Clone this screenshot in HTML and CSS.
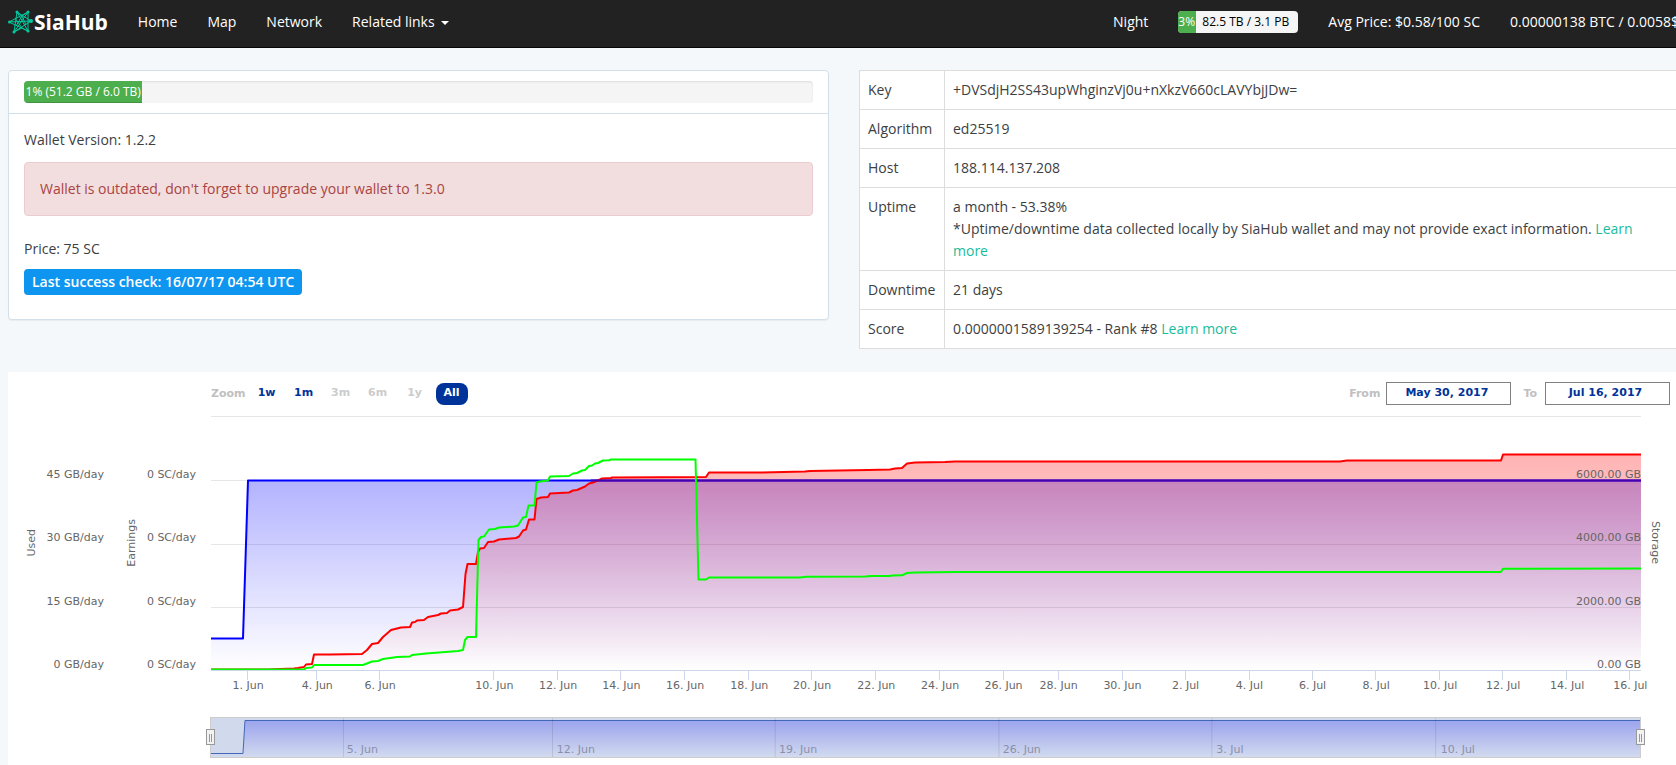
FILE: index.html
```html
<!DOCTYPE html>
<html lang="en">
<head>
<meta charset="utf-8">
<title>SiaHub</title>
<link rel="stylesheet" href="styles.css">
</head>
<body>
<header class="navbar">
  <a class="brand" href="#">
    <svg class="brand-icon" viewBox="0 0 26 24" aria-hidden="true">
      <path d="M9 2 L20 21 M9 2 L6 22 M20 2 L6 22 M20 2 L20 21 M1 12 L20 2 M1 12 L20 21 M1 12 L23 11 M9 2 L23 11 M6 22 L23 11 M6 22 L14 18 L20 21 M9 2 L14 6 L20 2 M7 8 L14 18 M14 6 L8 16 M14 6 L18 15"/>
      <circle cx="9" cy="2" r="1.500"/><circle cx="20" cy="2" r="1.500"/><circle cx="1.500" cy="12" r="1.500"/><circle cx="6" cy="22" r="1.500"/><circle cx="20" cy="21" r="1.500"/>
      <circle cx="23" cy="11" r="2"/>
    </svg>
    <span>SiaHub</span>
  </a>
  <nav class="menu">
    <a href="#">Home</a>
    <a href="#">Map</a>
    <a href="#">Network</a>
    <a href="#">Related links<span class="caret"></span></a>
  </nav>
  <div class="menu menu-right">
    <a href="#">Night</a>
    <div class="usage"><span class="usage-bar">3%</span><span class="usage-text">82.5 TB / 3.1 PB</span></div>
    <span class="stat">Avg Price: $0.58/100 SC</span>
    <span class="stat">0.00000138 BTC / 0.0058$</span>
  </div>
</header>

<main class="page">
  <div class="columns">
    <section class="card">
      <div class="card-head">
        <div class="progress"><div class="progress-bar">1% (51.2 GB / 6.0 TB)</div></div>
      </div>
      <div class="card-body">
        <p>Wallet Version: 1.2.2</p>
        <div class="alert">Wallet is outdated, don't forget to upgrade your wallet to 1.3.0</div>
        <p>Price: 75 SC</p>
        <span class="label">Last success check: 16/07/17 04:54 UTC</span>
      </div>
    </section>
    <table class="info">
      <tr><th scope="row">Key</th><td>+DVSdjH2SS43upWhginzVj0u+nXkzV660cLAVYbjJDw=</td></tr>
      <tr><th scope="row">Algorithm</th><td>ed25519</td></tr>
      <tr><th scope="row">Host</th><td>188.114.137.208</td></tr>
      <tr><th scope="row">Uptime</th><td>a month - 53.38%<br>*Uptime/downtime data collected locally by SiaHub wallet and may not provide exact information. <a href="#">Learn more</a></td></tr>
      <tr><th scope="row">Downtime</th><td>21 days</td></tr>
      <tr><th scope="row">Score</th><td>0.0000001589139254 - Rank #8 <a href="#">Learn more</a></td></tr>
    </table>
  </div>

  <section class="chart">
    <div class="toolbar">
      <div class="ranges">
        <span class="tool-label">Zoom</span>
        <button type="button">1w</button>
        <button type="button">1m</button>
        <button type="button" disabled>3m</button>
        <button type="button" disabled>6m</button>
        <button type="button" disabled>1y</button>
        <button type="button" class="active">All</button>
      </div>
      <div class="dates">
        <label class="tool-label" for="from">From</label>
        <input id="from" type="text" value="May 30, 2017">
        <label class="tool-label" for="to">To</label>
        <input id="to" type="text" value="Jul 16, 2017">
      </div>
    </div>
    <div class="stage">
      <div class="axis">
        <span class="axis-title">Used</span>
        <div class="axis-values"><span>45 GB/day</span><span>30 GB/day</span><span>15 GB/day</span><span>0 GB/day</span></div>
      </div>
      <div class="axis">
        <span class="axis-title">Earnings</span>
        <div class="axis-values"><span>0 SC/day</span><span>0 SC/day</span><span>0 SC/day</span><span>0 SC/day</span></div>
      </div>
      <div class="plot">
        <svg class="series" viewBox="0 0 1430 254" preserveAspectRatio="none" aria-hidden="true">
          <defs>
            <linearGradient id="blueFill" gradientUnits="userSpaceOnUse" x1="0" y1="64" x2="0" y2="254"><stop offset="0" stop-color="#00f" stop-opacity=".3"/><stop offset="1" stop-color="#00f" stop-opacity="0"/></linearGradient>
            <linearGradient id="redFill" gradientUnits="userSpaceOnUse" x1="0" y1="38" x2="0" y2="254"><stop offset="0" stop-color="#f00" stop-opacity=".3"/><stop offset="1" stop-color="#f00" stop-opacity="0"/></linearGradient>
          </defs>
          <path class="grid" d="M0 .5H1430M0 64.500H1430M0 128.500H1430M0 191.500H1430"/>
          <path fill="url(#blueFill)" d="M0 222H32L37 64H1430V254H0Z"/>
          <path class="line blue" d="M0 222.500H32L37 64.500H1430"/>
          <path fill="url(#redFill)" d="M0 253.500H57L83 252.500L87 252L93 251L95 248.500L101 248L103 238.500H119L151 238L156 234L161 228L167 227L172 221L180 214L190 211.500L199 211L201 206.500L204 206L206 204.500L213 204L217 201L227 199L230 197.500L236 197L239 194.500L247 193.500L252 191L254.500 158L256.500 148H265L267 136L269 132.500L273 132L277 126L283 125.500L288 123.500L305 122L308 120.500L312 114.500L315 113.500L318 103.500H323.500L325.500 83L330 81.500L337 81L339 77.500L358 76.500L362 74.500L366 74L374 70.500L378 67.500L382 66.500L389 63.500L391 62.500L400 62L401 61.500L495 61L498 56.500H549L594 55.500L599 55L657 54L679 53.500L684 52.500L691 52L696 47.500L704 46.500L734 46L744 45.500H1129L1136 44.500H1290L1292 38.500H1430V254H0Z"/>
          <path class="line red" d="M0 253.500H57L83 252.500L87 252L93 251L95 248.500L101 248L103 238.500H119L151 238L156 234L161 228L167 227L172 221L180 214L190 211.500L199 211L201 206.500L204 206L206 204.500L213 204L217 201L227 199L230 197.500L236 197L239 194.500L247 193.500L252 191L254.500 158L256.500 148H265L267 136L269 132.500L273 132L277 126L283 125.500L288 123.500L305 122L308 120.500L312 114.500L315 113.500L318 103.500H323.500L325.500 83L330 81.500L337 81L339 77.500L358 76.500L362 74.500L366 74L374 70.500L378 67.500L382 66.500L389 63.500L391 62.500L400 62L401 61.500L495 61L498 56.500H549L594 55.500L599 55L657 54L679 53.500L684 52.500L691 52L696 47.500L704 46.500L734 46L744 45.500H1129L1136 44.500H1290L1292 38.500H1430"/>
          <path class="line overlap" d="M380 64.500H1430"/>
          <path class="line green" d="M0 253.500H93L95 252L101 251.500L103 249H152L161 245.500L167 245L172 243L186 241L199 240.500L201 239L215 237.500L247 235L252 234L254 224L256.500 221H265L267.500 124L270 121L273 120.500L278 113.500L284 113L288 111.500L303 110.500L307 109.500L312 101.500L315 101L317.500 89.500H323.500L325.500 66.500L329 65.500L337 64.500L339 60.500L358 60L362 57.500L366 57L371 54.500L374 54L378 50L381 49.500L384 47.500L387 47L392 44.500L398 44.200L400 43.500H484.500L487.500 163.500H495L498 161.500H589L595 160.700L654 160.500L660 160H679L681 159.500L691 159.300L696 157L704 156.500L744 156H1290L1292 152.700L1430 152.500"/>
        </svg>
        <div class="storage-values"><span>6000.00 GB</span><span>4000.00 GB</span><span>2000.00 GB</span><span>0.00 GB</span></div>
      </div>
      <span class="storage-title">Storage</span>

      <svg class="dates-axis" role="img" aria-label="Dates">
        <g class="ticks">
          <line x2="100%" y1=".5" y2=".5"/>
          <line x1="2.55%" x2="2.55%" y2="10"/><line x1="7.38%" x2="7.38%" y2="10"/><line x1="11.78%" x2="11.78%" y2="10"/><line x1="19.76%" x2="19.76%" y2="10"/><line x1="24.23%" x2="24.23%" y2="10"/><line x1="28.64%" x2="28.64%" y2="10"/><line x1="33.11%" x2="33.11%" y2="10"/><line x1="37.59%" x2="37.59%" y2="10"/><line x1="41.99%" x2="41.99%" y2="10"/><line x1="46.47%" x2="46.47%" y2="10"/><line x1="50.94%" x2="50.94%" y2="10"/><line x1="55.42%" x2="55.42%" y2="10"/><line x1="59.27%" x2="59.27%" y2="10"/><line x1="63.74%" x2="63.74%" y2="10"/><line x1="68.15%" x2="68.15%" y2="10"/><line x1="72.62%" x2="72.62%" y2="10"/><line x1="77.03%" x2="77.03%" y2="10"/><line x1="81.43%" x2="81.43%" y2="10"/><line x1="85.91%" x2="85.91%" y2="10"/><line x1="90.31%" x2="90.31%" y2="10"/><line x1="94.79%" x2="94.79%" y2="10"/><line x1="99.2%" x2="99.2%" y2="10"/>
        </g>
        <g class="tick-text">
          <text x="2.6%" y="19">1. Jun</text><text x="7.43%" y="19">4. Jun</text><text x="11.83%" y="19">6. Jun</text><text x="19.81%" y="19">10. Jun</text><text x="24.28%" y="19">12. Jun</text><text x="28.69%" y="19">14. Jun</text><text x="33.16%" y="19">16. Jun</text><text x="37.64%" y="19">18. Jun</text><text x="42.04%" y="19">20. Jun</text><text x="46.52%" y="19">22. Jun</text><text x="50.99%" y="19">24. Jun</text><text x="55.42%" y="19">26. Jun</text><text x="59.27%" y="19">28. Jun</text><text x="63.74%" y="19">30. Jun</text><text x="68.15%" y="19">2. Jul</text><text x="72.62%" y="19">4. Jul</text><text x="77.03%" y="19">6. Jul</text><text x="81.48%" y="19">8. Jul</text><text x="85.96%" y="19">10. Jul</text><text x="90.36%" y="19">12. Jul</text><text x="94.84%" y="19">14. Jul</text><text x="99.25%" y="19">16. Jul</text>
        </g>
      </svg>

      <div class="navigator">
        <svg class="nav-plot" role="img" aria-label="Date range">
          <defs>
            <linearGradient id="navFill" x1="0" y1="0" x2="0" y2="1"><stop offset="0" stop-color="#9ca4ee"/><stop offset="1" stop-color="#d1daee"/></linearGradient>
          </defs>
          <svg width="100%" height="100%" viewBox="0 0 1430 39" preserveAspectRatio="none">
            <path fill="url(#navFill)" d="M0 35.500H32L34 2.500H1430V39H0Z"/>
            <path class="nav-line" d="M0 35.500H32L34 2.500H1430"/>
          </svg>
          <g class="nav-grid"><line x1="9.27%" x2="9.27%" y2="39"/><line x1="23.9%" x2="23.9%" y2="39"/><line x1="39.48%" x2="39.48%" y2="39"/><line x1="55.14%" x2="55.14%" y2="39"/><line x1="70.04%" x2="70.04%" y2="39"/><line x1="85.7%" x2="85.7%" y2="39"/></g>
          <g class="nav-text"><text x="9.5%" y="35">5. Jun</text><text x="24.2%" y="35">12. Jun</text><text x="39.75%" y="35">19. Jun</text><text x="55.4%" y="35">26. Jun</text><text x="70.35%" y="35">3. Jul</text><text x="86.05%" y="35">10. Jul</text></g>
        </svg>
        <span class="handle handle-left"></span>
        <span class="handle handle-right"></span>
      </div>
    </div>
  </section>
</main>
</body>
</html>
```

FILE: styles.css
```css
* { box-sizing: border-box; }

body {
  margin: 0;
  overflow: hidden;
  background: #f4f8fb;
  color: #3c4043;
  font: 14px/22px "Open Sans", "Noto Sans", sans-serif;
}

a { color: #18bc9c; text-decoration: none; }
p { margin: 0; }

/* Top bar */
.navbar {
  display: flex;
  align-items: center;
  height: 48px;
  padding: 0 0 4px 8px;
  overflow: hidden;
  background: #222;
  border-bottom: 1px solid #080808;
}
.brand {
  display: flex;
  align-items: center;
  color: #fff;
  font-size: 21px;
  font-weight: 700;
}
.brand-icon { width: 26px; height: 24px; fill: #00cba0; stroke: #00cba0; }
.brand-icon path { fill: none; stroke-width: 1; }
.brand-icon circle { stroke: none; }
.menu {
  display: flex;
  align-items: center;
  gap: 30px;
  margin-left: 30px;
  white-space: nowrap;
}
.menu a, .stat { color: #fff; }
.menu-right { flex: none; margin-left: auto; margin-right: -3px; }
.caret {
  display: inline-block;
  margin-left: 6px;
  vertical-align: middle;
  border: 4px solid transparent;
  border-top-color: #fff;
  border-bottom: 0;
}
.usage {
  display: flex;
  width: 120px;
  height: 22px;
  overflow: hidden;
  border-radius: 4px;
  background: #f5f5f5;
  color: #000;
  font-size: 12px;
}
.usage-bar { width: 18px; background: #4cae4c; color: #fff; }
.usage-text { padding-left: 6px; }

/* Page */
.page { margin: 22px -4px 0 8px; }
.columns {
  display: grid;
  grid-template-columns: 1fr 1fr;
  gap: 30px;
  align-items: start;
  margin-bottom: 23px;
}

.card {
  background: #fff;
  border: 1px solid #d3e0e9;
  border-radius: 4px;
  box-shadow: 0 1px 1px rgba(0, 0, 0, .05);
}
.card-head { padding: 10px 15px; border-bottom: 1px solid #d3e0e9; }
.card-body { padding: 15px 15px 24px; }
.progress {
  height: 22px;
  overflow: hidden;
  border-radius: 4px;
  background: #f5f5f5;
  box-shadow: inset 0 1px 2px rgba(0, 0, 0, .1);
}
.progress-bar {
  width: 15%;
  height: 100%;
  background: #4cae4c;
  box-shadow: inset 0 -1px 0 rgba(0, 0, 0, .15);
  color: #fff;
  font-size: 12px;
  text-align: center;
  white-space: nowrap;
}
.alert {
  margin: 11px 0 22px;
  padding: 15px;
  border: 1px solid #ebccd1;
  border-radius: 4px;
  background: #f2dede;
  color: #a94442;
}
.label {
  display: block;
  width: fit-content;
  margin-top: 9px;
  padding: 2px 8px;
  border-radius: 4px;
  background: #0d95ef;
  color: #fff;
  font-weight: 600;
}

.info { width: 100%; border-collapse: collapse; background: #fff; }
.info th, .info td {
  padding: 8px;
  border: 1px solid #ddd;
  font-weight: 400;
  text-align: left;
  vertical-align: top;
}
.info th { width: 85px; }

/* Chart */
.chart {
  padding-bottom: 30px;
  background: #fff;
  color: #666;
  font: 11px/12px "DejaVu Sans", sans-serif;
}
.toolbar {
  display: flex;
  justify-content: space-between;
  padding: 10px 10px 11px 203px;
}
.ranges, .dates { display: flex; align-items: center; gap: 5px; }
.dates { gap: 6px; }
.tool-label { color: #c0c0c0; font-weight: 700; }
.dates input + .tool-label { margin: 0 2px 0 6px; }
.ranges button {
  width: 32px;
  height: 22px;
  padding: 0 0 2px;
  border: 0;
  border-radius: 8px;
  background: none;
  color: #039;
  font: inherit;
  font-weight: 700;
}
.ranges button:disabled { color: #ccc; }
.ranges button.active { background: #039; color: #fff; }
.dates input {
  width: 125px;
  height: 23px;
  padding: 0 4px 2px 0;
  border: 1px solid #808080;
  background: #fff;
  color: #039;
  font: inherit;
  font-weight: 700;
  text-align: center;
}

.stage {
  display: grid;
  grid-template-columns: 96px 92px 1fr 39px;
  grid-template-rows: 254px 47px 41px;
}
.axis { display: flex; align-items: center; justify-content: space-between; }
.axis:first-child { padding-left: 18px; }
.axis:nth-child(2) { padding-left: 22px; }
.axis-title { writing-mode: vertical-rl; transform: rotate(180deg); }
.axis-values, .storage-values {
  display: grid;
  grid-template-rows: repeat(4, 1fr);
  align-items: end;
  height: 100%;
  line-height: 10px;
  text-align: right;
}
.plot { position: relative; margin-left: 15px; }
.series { display: block; width: 100%; height: 100%; }
.series path { vector-effect: non-scaling-stroke; }
.grid { fill: none; stroke: #e6e6e6; stroke-width: 1; }
.line { fill: none; stroke-width: 2; stroke-linejoin: round; }
.blue { stroke: #00f; }
.red { stroke: #f00; }
.overlap { stroke: #4400b4; }
.green { stroke: #0f0; }
.storage-values { position: absolute; top: 0; right: 0; }
.storage-title {
  align-self: center;
  justify-self: start;
  margin-left: 8px;
  writing-mode: vertical-rl;
}
.dates-axis {
  grid-column: 3;
  width: calc(100% - 15px);
  height: 24px;
  margin-left: 15px;
  overflow: visible;
}
.ticks { stroke: #ccd6eb; }
.tick-text { fill: #666; text-anchor: middle; }

.navigator {
  position: relative;
  grid-column: 3;
  margin-left: 14px;
  border: 1px solid #ccc;
  background: #d1d9ec;
}
.nav-plot { display: block; width: 100%; height: 39px; }
.nav-line { fill: none; stroke: #4468b8; vector-effect: non-scaling-stroke; }
.nav-grid { stroke: #000; stroke-opacity: .1; }
.nav-text { fill: #8b8fab; }
.handle {
  position: absolute;
  top: 11px;
  width: 9px;
  height: 16px;
  border: 1px solid #999;
  background: linear-gradient(90deg, transparent 2px, #999 2px 3px, transparent 3px 4px, #999 4px 5px, transparent 5px) 0 4px / 7px 8px no-repeat #f2f2f2;
}
.handle-left { left: -5px; }
.handle-right { right: -5px; }
```
